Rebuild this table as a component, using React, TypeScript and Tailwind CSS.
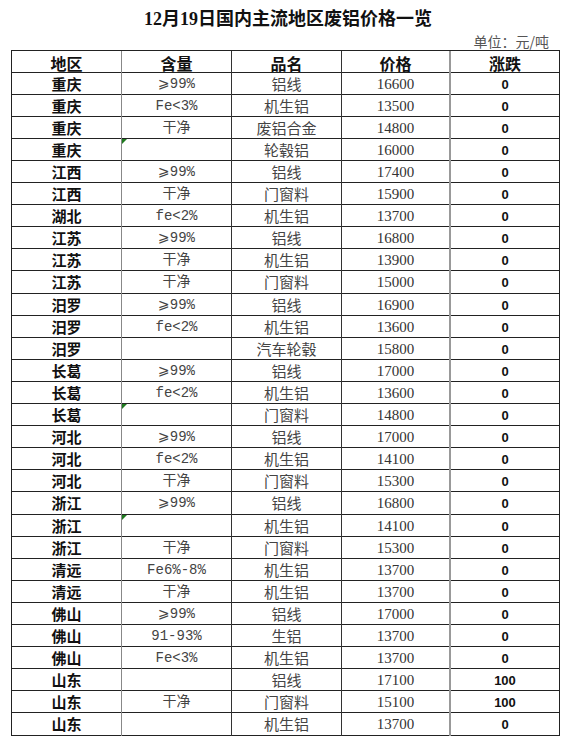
const rows: [string, string, string, string, string, boolean?][] = [
  ["重庆", "⩾99%", "铝线", "16600", "0"],
  ["重庆", "Fe<3%", "机生铝", "13500", "0"],
  ["重庆", "干净", "废铝合金", "14800", "0"],
  ["重庆", "", "轮毂铝", "16000", "0", true],
  ["江西", "⩾99%", "铝线", "17400", "0"],
  ["江西", "干净", "门窗料", "15900", "0"],
  ["湖北", "fe<2%", "机生铝", "13700", "0"],
  ["江苏", "⩾99%", "铝线", "16800", "0"],
  ["江苏", "干净", "机生铝", "13900", "0"],
  ["江苏", "干净", "门窗料", "15000", "0"],
  ["汨罗", "⩾99%", "铝线", "16900", "0"],
  ["汨罗", "fe<2%", "机生铝", "13600", "0"],
  ["汨罗", "", "汽车轮毂", "15800", "0"],
  ["长葛", "⩾99%", "铝线", "17000", "0"],
  ["长葛", "fe<2%", "机生铝", "13600", "0"],
  ["长葛", "", "门窗料", "14800", "0", true],
  ["河北", "⩾99%", "铝线", "17000", "0"],
  ["河北", "fe<2%", "机生铝", "14100", "0"],
  ["河北", "干净", "门窗料", "15300", "0"],
  ["浙江", "⩾99%", "铝线", "16800", "0"],
  ["浙江", "", "机生铝", "14100", "0", true],
  ["浙江", "干净", "门窗料", "15300", "0"],
  ["清远", "Fe6%-8%", "机生铝", "13700", "0"],
  ["清远", "干净", "机生铝", "13700", "0"],
  ["佛山", "⩾99%", "铝线", "17000", "0"],
  ["佛山", "91-93%", "生铝", "13700", "0"],
  ["佛山", "Fe<3%", "机生铝", "13700", "0"],
  ["山东", "", "铝线", "17100", "100"],
  ["山东", "干净", "门窗料", "15100", "100"],
  ["山东", "", "机生铝", "13700", "0"],
];

const grid = "grid grid-cols-[110px_110px_110px_109px_108px]";
const cell = "flex items-center justify-center border-r";

export default function App() {
  return (
    <div className="w-[580px] h-[745px] bg-white font-['Noto_Sans_CJK_SC',sans-serif] overflow-hidden">
      <div className="h-[32px] pt-[6px] flex items-center justify-center">
        <h1 className="text-[18px] font-bold text-[#111] leading-none ml-[-4px] font-['Liberation_Serif','Noto_Sans_CJK_SC',serif]">
          12月19日国内主流地区废铝价格一览
        </h1>
      </div>
      <div className="h-[18px] flex items-center justify-end pr-[31px] text-[14px] leading-none text-[#555]">
        单位：元/吨
      </div>

      <div className="ml-[11px] w-[549px] border border-[#222]">
        {/* header */}
        <div className={`${grid} h-[22px] border-b border-[#222] text-[16px] font-bold text-[#111]`}>
          <div className={`${cell} border-[#888]`}>地区</div>
          <div className={`${cell} border-[#333]`}>含量</div>
          <div className={`${cell} border-[#333]`}>品名</div>
          <div className={`${cell} border-[#999] border-r-2`}>价格</div>
          <div className="flex items-center justify-center">涨跌</div>
        </div>

        {rows.map(([region, content, name, price, change, mark], i) => (
          <div
            key={i}
            className={`${grid} border-b border-[#222] last:border-b-0 ${
              i === 9 || i === 19 ? "h-[23px]" : "h-[22px]"
            }`}
          >
            <div className={`${cell} border-[#888] text-[15px] font-bold text-[#111]`}>{region}</div>
            <div
              className={`${cell} relative border-[#333] text-[14px] text-[#444] font-['Liberation_Mono','DejaVu_Sans','Noto_Sans_CJK_SC',monospace]`}
            >
              {mark && (
                <span className="absolute left-0 top-0 w-0 h-0 border-t-[5px] border-t-[#1f7a1f] border-r-[5px] border-r-transparent" />
              )}
              {content}
            </div>
            <div className={`${cell} border-[#333] text-[15px] text-[#444]`}>{name}</div>
            <div
              className={`${cell} border-[#999] border-r-2 text-[15px] text-[#333] font-['Liberation_Serif',serif]`}
            >
              {price}
            </div>
            <div className="flex items-center justify-center text-[13px] font-bold text-[#111] font-['Liberation_Sans',sans-serif]">
              {change}
            </div>
          </div>
        ))}
      </div>
    </div>
  );
}
